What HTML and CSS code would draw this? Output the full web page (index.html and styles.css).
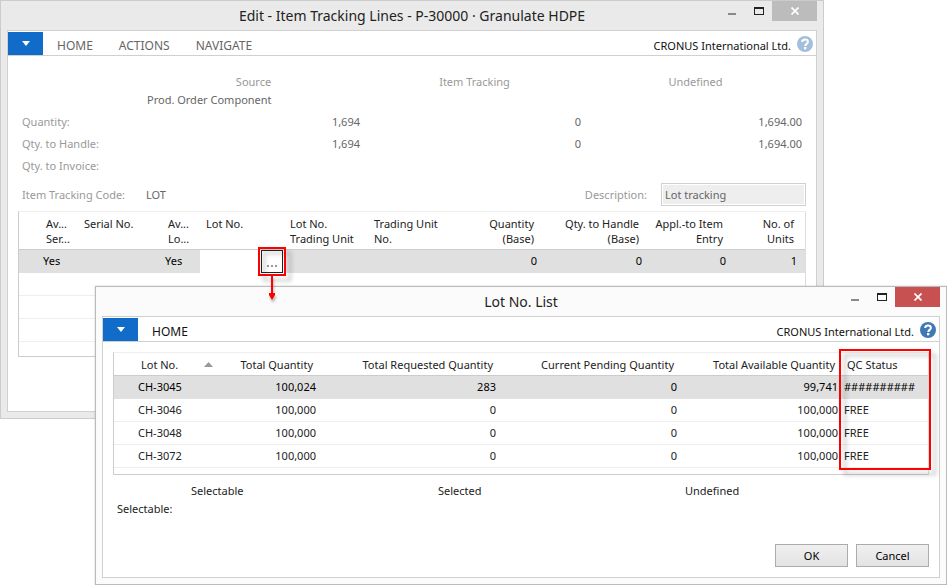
FILE: index.html
```html
<!DOCTYPE html>
<html lang="en">
<head>
<meta charset="utf-8">
<title>Item Tracking Lines</title>
<link rel="stylesheet" href="styles.css">
</head>
<body>
<main class="desktop">

  <section class="window window-lines" aria-label="Edit - Item Tracking Lines">
    <header class="titlebar">
      <h1 class="title">Edit - Item Tracking Lines - P-30000 · Granulate HDPE</h1>
      <div class="controls">
        <button class="control" aria-label="Minimize"><svg width="10" height="10" viewBox="0 0 10 10"><rect x="1" y="7" width="8" height="2" fill="#8a8a8a"/></svg></button>
        <button class="control" aria-label="Maximize"><svg width="10" height="10" viewBox="0 0 10 10"><path d="M0 1h10v8H0zM1 3v5h8V3z" fill="#222" fill-rule="evenodd"/></svg></button>
        <button class="control close" aria-label="Close"><svg width="8" height="8" viewBox="0 0 8 8"><path d="M.5.5l7 7M7.5.5l-7 7" stroke="#fff" stroke-width="1.7"/></svg></button>
      </div>
    </header>
    <div class="client">
      <nav class="ribbon">
        <button class="app-menu" aria-label="Application menu"><svg width="8" height="5" viewBox="0 0 8 5"><path d="M0 0h8L4 5z" fill="#fff"/></svg></button>
        <a class="tab" href="#">HOME</a>
        <a class="tab" href="#">ACTIONS</a>
        <a class="tab" href="#">NAVIGATE</a>
        <span class="company">CRONUS International Ltd.</span>
        <button class="help" aria-label="Help"><svg width="16" height="16" viewBox="0 0 16 16"><circle cx="8" cy="8" r="8" fill="currentColor"/><path d="M5.2 6.1C5.2 4.4 6.4 3.6 8 3.6s2.9.9 2.9 2.4c0 1.8-2.6 2-2.6 3.9" fill="none" stroke="#fff" stroke-width="2"/><rect x="7" y="11" width="2.3" height="2.3" fill="#fff"/></svg></button>
      </nav>

      <div class="summary">
        <table>
          <colgroup><col class="summary-label"><col><col><col></colgroup>
          <thead>
            <tr><td></td><th>Source</th><th>Item Tracking</th><th>Undefined</th></tr>
            <tr class="source"><td></td><td>Prod. Order Component</td><td></td><td></td></tr>
          </thead>
          <tbody>
            <tr><th>Quantity:</th><td>1,694</td><td>0</td><td>1,694.00</td></tr>
            <tr><th>Qty. to Handle:</th><td>1,694</td><td>0</td><td>1,694.00</td></tr>
            <tr><th>Qty. to Invoice:</th><td></td><td></td><td></td></tr>
          </tbody>
        </table>
      </div>

      <div class="fields">
        <span class="field-label">Item Tracking Code:</span>
        <span class="field-value">LOT</span>
        <label class="field-label description-label" for="description">Description:</label>
        <input class="description" id="description" value="Lot tracking" readonly>
      </div>

      <div class="grid lines">
        <table>
          <colgroup><col class="w-mark"><col class="w-flag"><col class="w-text"><col class="w-flag"><col class="w-text"><col class="w-text"><col class="w-text"><col class="w-qty"><col class="w-handle"><col class="w-text"><col></colgroup>
          <thead>
            <tr><th></th><th>Av...<br>Ser...</th><th>Serial No.</th><th>Av...<br>Lo...</th><th>Lot No.</th><th>Lot No.<br>Trading Unit</th><th>Trading Unit<br>No.</th><th class="num">Quantity<br>(Base)</th><th class="num">Qty. to Handle<br>(Base)</th><th class="num">Appl.-to Item<br>Entry</th><th class="num">No. of<br>Units</th></tr>
          </thead>
          <tbody>
            <tr class="selected"><td></td><td>Yes</td><td></td><td>Yes</td><td class="editing"><button class="assist" aria-label="Look up lot number"><svg width="10" height="2" viewBox="0 0 10 2"><path d="M0 0h2v2H0zM4 0h2v2H4zM8 0h2v2H8z" fill="#999"/></svg></button></td><td></td><td></td><td class="num">0</td><td class="num">0</td><td class="num">0</td><td class="num">1</td></tr>
            <tr><td colspan="11"></td></tr>
            <tr><td colspan="11"></td></tr>
            <tr><td colspan="11"></td></tr>
          </tbody>
        </table>
      </div>
    </div>
  </section>

  <section class="window window-list" aria-label="Lot No. List">
    <header class="titlebar">
      <h2 class="title">Lot No. List</h2>
      <div class="controls">
        <button class="control" aria-label="Minimize"><svg width="10" height="10" viewBox="0 0 10 10"><rect x="1" y="7" width="8" height="2" fill="#8a8a8a"/></svg></button>
        <button class="control" aria-label="Maximize"><svg width="10" height="10" viewBox="0 0 10 10"><path d="M0 1h10v8H0zM1 3v5h8V3z" fill="#222" fill-rule="evenodd"/></svg></button>
        <button class="control close" aria-label="Close"><svg width="8" height="8" viewBox="0 0 8 8"><path d="M.5.5l7 7M7.5.5l-7 7" stroke="#fff" stroke-width="1.7"/></svg></button>
      </div>
    </header>
    <div class="client">
      <nav class="ribbon">
        <button class="app-menu" aria-label="Application menu"><svg width="8" height="5" viewBox="0 0 8 5"><path d="M0 0h8L4 5z" fill="#fff"/></svg></button>
        <a class="tab" href="#">HOME</a>
        <span class="company">CRONUS International Ltd.</span>
        <button class="help" aria-label="Help"><svg width="16" height="16" viewBox="0 0 16 16"><circle cx="8" cy="8" r="8" fill="currentColor"/><path d="M5.2 6.1C5.2 4.4 6.4 3.6 8 3.6s2.9.9 2.9 2.4c0 1.8-2.6 2-2.6 3.9" fill="none" stroke="#fff" stroke-width="2"/><rect x="7" y="11" width="2.3" height="2.3" fill="#fff"/></svg></button>
      </nav>

      <div class="grid lots">
        <table>
          <colgroup><col class="w-mark"><col class="w-text"><col class="w-total"><col class="w-requested"><col class="w-pending"><col class="w-available"><col></colgroup>
          <thead>
            <tr><th></th><th><span class="sorted">Lot No.<svg width="9" height="5" viewBox="0 0 9 5"><path d="M4.500 0L9 5H0z" fill="#999"/></svg></span></th><th class="num">Total Quantity</th><th class="num">Total Requested Quantity</th><th class="num">Current Pending Quantity</th><th class="num">Total Available Quantity</th><th>QC Status</th></tr>
          </thead>
          <tbody>
            <tr class="selected"><td></td><td>CH-3045</td><td class="num">100,024</td><td class="num">283</td><td class="num">0</td><td class="num">99,741</td><td>##########</td></tr>
            <tr><td></td><td>CH-3046</td><td class="num">100,000</td><td class="num">0</td><td class="num">0</td><td class="num">100,000</td><td>FREE</td></tr>
            <tr><td></td><td>CH-3048</td><td class="num">100,000</td><td class="num">0</td><td class="num">0</td><td class="num">100,000</td><td>FREE</td></tr>
            <tr><td></td><td>CH-3072</td><td class="num">100,000</td><td class="num">0</td><td class="num">0</td><td class="num">100,000</td><td>FREE</td></tr>
          </tbody>
        </table>
        <div class="callout callout-status"></div>
      </div>

      <table class="totals">
        <colgroup><col class="totals-label"><col class="totals-value"><col class="totals-value"><col></colgroup>
        <tr><td></td><th>Selectable</th><th>Selected</th><th>Undefined</th></tr>
        <tr><th>Selectable:</th><td></td><td></td><td></td></tr>
      </table>

      <footer class="actions">
        <button class="action">OK</button>
        <button class="action">Cancel</button>
      </footer>
    </div>
  </section>

  <div class="callout callout-assist"></div>
  <svg class="arrow" width="8" height="24" viewBox="0 0 8 24"><path d="M3 0h2v17h2v2L4 24 1 19v-2h2z" fill="#f00"/></svg>
</main>
</body>
</html>
```

FILE: styles.css
```css
* {
  box-sizing: border-box;
}

body {
  margin: 0;
  background: #fff;
  color: #222;
  font: 11px/15px "Noto Sans", "Open Sans", sans-serif;
}

button,
input {
  margin: 0;
  padding: 0;
  border: 0;
  background: none;
  color: inherit;
  font: inherit;
}

svg {
  display: block;
}

table {
  width: 100%;
  border-collapse: separate;
  border-spacing: 0;
  table-layout: fixed;
}

th,
td {
  padding: 0;
  font-weight: normal;
  text-align: left;
  white-space: nowrap;
}

.desktop {
  position: relative;
  min-height: 100vh;
  overflow: hidden;
}

/* Window frame */

.window {
  position: absolute;
  display: flex;
  flex-direction: column;
  padding: 0 6px 6px;
  border: 1px solid #ccc;
  background: #eaeaea;
}

.window-lines {
  top: 0;
  left: 0;
  right: 123px;
}

.window-list {
  top: 286px;
  left: 95px;
  right: 0;
  border-color: #bbb;
  background: #fbfbfb;
  box-shadow: 0 0 2px rgba(0, 0, 0, 0.2);
}

.titlebar {
  display: grid;
  grid-template-columns: 1fr;
  height: 29px;
}

.title,
.controls {
  grid-area: 1 / 1;
}

.title {
  margin: 0;
  font-size: 14px;
  font-weight: normal;
  line-height: 29px;
  text-align: center;
}

.controls {
  display: flex;
  justify-self: end;
  height: 20px;
}

.control {
  display: flex;
  align-items: center;
  justify-content: center;
  width: 27px;
}

.close {
  width: 45px;
  background: #bcbcbc;
}

.window-list .close {
  background: #c75050;
}

.client {
  border: 1px solid #d0d0d0;
  background: #fff;
}

/* Ribbon */

.ribbon {
  display: flex;
  align-items: center;
  height: 25px;
  padding-right: 3px;
  border-bottom: 1px solid #d0d0d0;
}

.app-menu {
  display: flex;
  align-items: center;
  justify-content: center;
  align-self: flex-end;
  width: 35px;
  height: 23px;
  background: #106cc8;
}

.tab {
  margin-left: 14px;
  padding: 4px 12px 0 0;
  color: #666;
  font-size: 12px;
  text-decoration: none;
}

.window-list .tab {
  color: #111;
}

.company {
  margin-left: auto;
  padding-top: 4px;
  color: #111;
}

.help {
  margin-left: 6px;
  padding-top: 2px;
  color: #a3bfdc;
}

.window-list .help {
  color: #3f78b5;
}

/* Summary */

.summary {
  padding: 17px 14px 7px;
  color: #666;
}

.summary-label {
  width: 117px;
}

.summary th {
  color: #999;
}

.summary thead tr {
  height: 17px;
}

.summary thead .source {
  height: 20px;
}

.summary .source td {
  padding-top: 2px;
  vertical-align: top;
}

.summary thead th {
  text-align: center;
}

.summary tr > :nth-child(n + 2) {
  padding-left: 8px;
}

.summary tbody tr {
  height: 22px;
}

.summary tbody td {
  text-align: right;
}

.fields {
  display: flex;
  align-items: center;
  height: 23px;
  margin: 0 10px 5px 14px;
  color: #666;
}

.field-label {
  color: #999;
}

.field-label:first-child {
  width: 124px;
}

.description-label {
  margin-left: auto;
  margin-right: 14px;
}

.description {
  width: 145px;
  height: 23px;
  padding: 0 3px;
  border: 1px solid #d0d0d0;
  background: #eee;
  box-shadow: inset 0 0 0 1px #fff;
}

/* Data grids */

.grid {
  position: relative;
  margin: 0 10px;
  border: 1px solid #ccc;
  border-top-color: #eee;
  border-right-color: #ddd;
}

.lines {
  height: 146px;
  margin-bottom: 54px;
}

.lots {
  height: 123px;
  margin-top: 10px;
}

.grid th {
  height: 23px;
  padding: 0 6px;
  border-bottom: 1px solid #ccc;
  vertical-align: middle;
}

.lines th {
  height: 38px;
  padding-top: 4px;
  vertical-align: top;
}

.grid td {
  height: 23px;
  padding: 0 3px 2px;
  border-bottom: 1px solid #eee;
}

.grid .num {
  text-align: right;
}

.lines th:last-child {
  padding-right: 11px;
}

.lines td.num:last-child {
  padding-right: 8px;
}

.grid .selected td {
  border-bottom-color: #e0e0e0;
  background: #e0e0e0;
  color: #000;
}

.grid .selected .editing {
  padding: 0 1px 0 0;
  border-bottom: 0;
  background: #fff;
}

.assist {
  display: flex;
  align-items: flex-end;
  justify-content: center;
  width: 22px;
  height: 23px;
  margin-left: auto;
  padding-bottom: 5px;
  border: 1px solid #222;
}

.sorted {
  display: flex;
  align-items: center;
  justify-content: space-between;
}

.w-mark { width: 21px; }
.w-flag { width: 38px; }
.w-text { width: 84px; }
.w-qty { width: 88px; }
.w-handle { width: 105px; }
.w-total { width: 100px; }
.w-requested { width: 180px; }
.w-pending { width: 181px; }
.w-available { width: 161px; }

/* Totals and dialog buttons */

.totals {
  margin-top: 6px;
  padding-left: 14px;
}

.totals-label {
  width: 74px;
}

.totals-value {
  width: 247px;
}

.totals tr {
  height: 18px;
}

.actions {
  display: flex;
  justify-content: flex-end;
  gap: 8px;
  padding: 27px 10px 10px;
}

.action {
  width: 73px;
  height: 23px;
  border: 1px solid #acacac;
  background: linear-gradient(#f0f0f0, #e3e3e3);
  color: #000;
}

/* Red markers */

.callout,
.arrow {
  position: absolute;
  filter: drop-shadow(5px 5px 2px rgba(0, 0, 0, 0.25));
  pointer-events: none;
}

.callout {
  border: 2px solid #f00;
}

.callout-assist {
  top: 247px;
  left: 258px;
  width: 28px;
  height: 29px;
}

.callout-status {
  top: -4px;
  right: -3px;
  bottom: 4px;
  width: 92px;
}

.arrow {
  top: 276px;
  left: 268px;
  filter: drop-shadow(1px 3px 1px rgba(0, 0, 0, 0.25));
}
```
